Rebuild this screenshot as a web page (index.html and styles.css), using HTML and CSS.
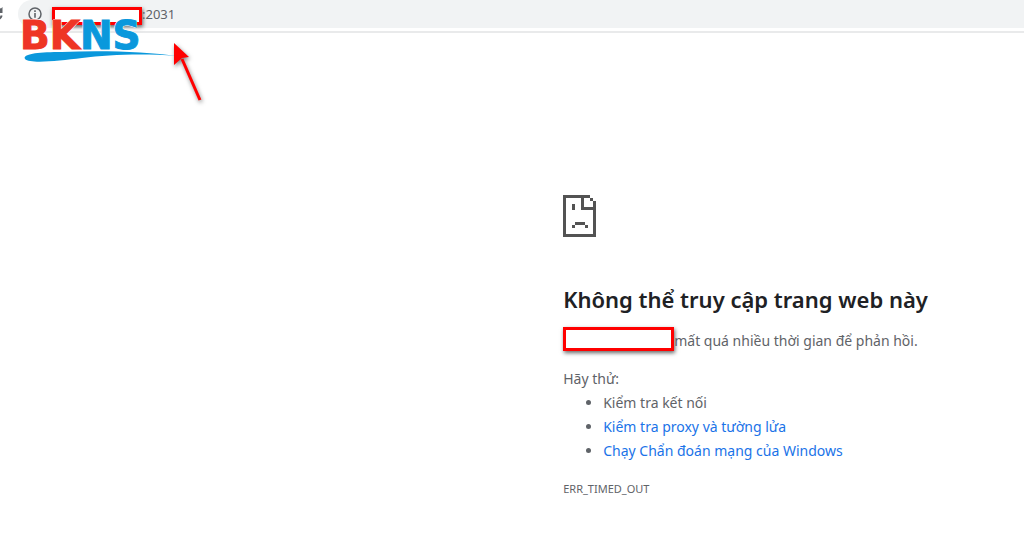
FILE: index.html
```
<!DOCTYPE html>
<html lang="vi">
<head>
  <meta charset="UTF-8">
  <meta name="viewport" content="width=device-width, initial-scale=1.0">
  <title>Không thể truy cập trang web này</title>
  <link rel="stylesheet" href="styles.css">
</head>
<body>
  <header class="toolbar">
    <button class="reload" type="button" aria-label="Tải lại">
      <svg width="16" height="16" viewBox="0 0 16 16">
        <path d="M13 4.500A6 6 0 1 0 13.700 9.500" fill="none" stroke="#5f6368" stroke-width="2"/>
        <path d="M14.500 1v6h-6z" fill="#5f6368"/>
      </svg>
    </button>
    <div class="address">
      <svg class="info" width="14" height="14" viewBox="0 0 14 14">
        <circle cx="7" cy="7" r="6" fill="none" stroke="#5f6368" stroke-width="1.500"/>
        <path d="M6.200 3.300h1.600v1.600H6.200zM6.200 6h1.600v4.700H6.200z" fill="#5f6368"/>
      </svg>
      <span class="mask mask-url"></span>
      <span class="port">:2031</span>
    </div>
  </header>

  <div class="logo">
    <div class="logo-text"><span class="red">BK</span><span class="blue">NS</span></div>
    <svg class="swoosh" width="158" height="13" viewBox="0 0 158 13">
      <path d="M5 8C2 3 18 1 42 1C84 -1 128 1 157 5C120 2 88 4 62 7C38 10 10 13 5 8z" fill="#0a98dc"/>
    </svg>
  </div>

  <svg class="arrow" width="44" height="70" viewBox="0 0 44 70">
    <path d="M12 18L30 59" stroke="#f00" stroke-width="3" fill="none"/>
    <path d="M4 2L19 16L12 17L4 24z" fill="#f00"/>
  </svg>

  <main>
    <!-- Sad page icon -->
    <svg class="sad-page" width="34" height="42" viewBox="0 0 34 42" fill="#535353" shape-rendering="crispEdges">
      <path d="M0 0h27v3H3v36h27V15h3v27H0z"/>
      <path d="M18 3h3v9h12v3H18zM27 3h3v3h-3zM30 6h3v9h-3z"/>
      <path d="M9 9h3v6H9zM12 27h10v3H12zM9 30h3v3H9zM22 30h3v3h-3z"/>
    </svg>
    <h1>Không thể truy cập trang web này</h1>
    <p class="summary"><span class="mask mask-host"></span><span>mất quá nhiều thời gian để phản hồi.</span></p>
    <p class="try">Hãy thử:</p>
    <ul>
      <li>Kiểm tra kết nối</li>
      <li><a href="#">Kiểm tra proxy và tường lửa</a></li>
      <li><a href="#">Chạy Chẩn đoán mạng của Windows</a></li>
    </ul>
    <p class="code">ERR_TIMED_OUT</p>
  </main>
</body>
</html>
```
FILE: styles.css
```
body {
  margin: 0;
  background-color: #fff;
  color: #5f6368;
  font-family: "Noto Sans", "Open Sans", sans-serif;
  font-size: 14px;
  line-height: 24px;
}

.toolbar {
  display: flex;
  height: 31px;
  border-bottom: 2px solid #e9eaeb;
}

.reload {
  flex: none;
  width: 18px;
  height: 28px;
  padding: 0;
  border: none;
  background: none;
  overflow: hidden;
}

.reload svg {
  display: block;
  margin: 0 0 0 -12px;
}

.address {
  flex: 1;
  display: flex;
  align-items: center;
  height: 28px;
  padding-left: 10px;
  background-color: #f1f3f4;
  border-radius: 14px 0 0 14px;
}

.info {
  flex: none;
  margin-right: 10px;
}

.mask {
  flex: none;
  box-sizing: border-box;
  background-color: #fff;
  border: 3px solid #f00;
  box-shadow: 1px 2px 4px rgba(0, 0, 0, 0.6);
}

.mask-url {
  width: 90px;
  height: 18px;
  margin-top: 4px;
}

.mask-host {
  width: 111px;
  height: 24px;
}

.port {
  font-size: 13px;
}

/* Logo and arrow lie over the toolbar */
.logo {
  position: absolute;
  top: 20px;
  left: 20px;
}

.logo-text {
  font-family: "DejaVu Sans", sans-serif;
  font-size: 39px;
  font-weight: bold;
  line-height: 31px;
  -webkit-text-stroke: 1px;
  text-shadow: 1px 0 #fff, -1px 0 #fff, 0 1px #fff, 0 -1px #fff;
}

.red {
  color: #ee3524;
}

.blue {
  color: #0a98dc;
}

.swoosh {
  display: block;
}

.arrow {
  position: absolute;
  top: 41px;
  left: 170px;
  filter: drop-shadow(1px 2px 2px rgba(0, 0, 0, 0.5));
}

main {
  padding: 162px 16px 0 55%;
}

.sad-page {
  display: block;
}

h1 {
  margin: 44px 0 0;
  color: #202124;
  font-size: 22px;
  font-weight: 600;
  line-height: 36px;
}

p {
  margin: 0;
}

.summary {
  display: flex;
  align-items: flex-start;
  margin-top: 10px;
  line-height: 28px;
}

.try {
  margin-top: 12px;
}

ul {
  margin: 0;
  padding-left: 40px;
}

a {
  color: #1a73e8;
  text-decoration: none;
}

.code {
  margin-top: 14px;
  font-size: 11px;
}
```
